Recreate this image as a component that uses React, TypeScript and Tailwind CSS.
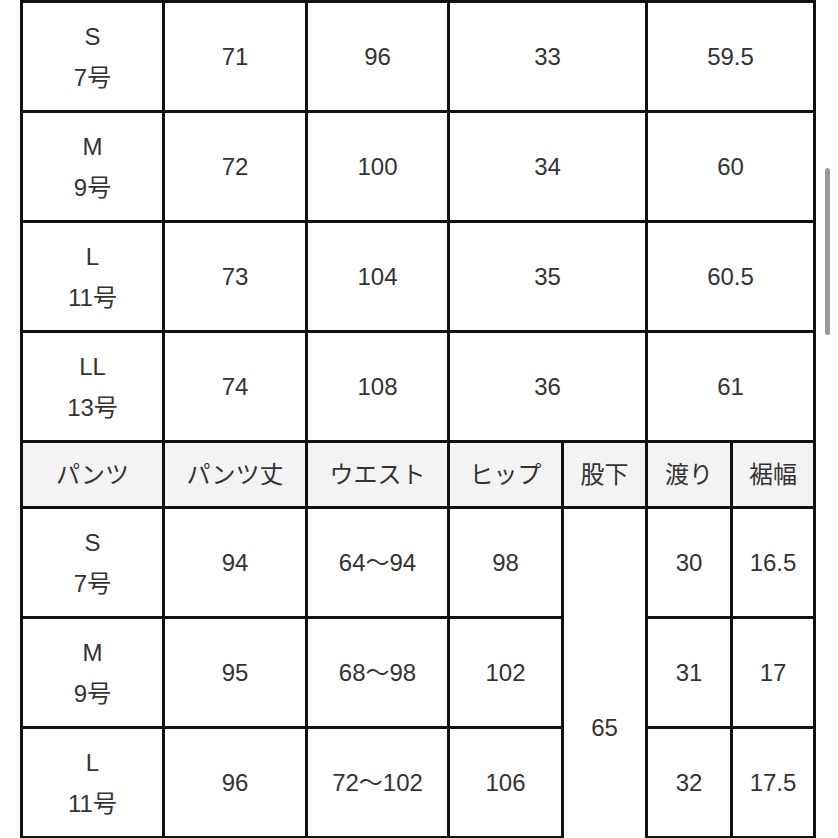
import React from "react";

type Row = { size: string; no: string; cells: string[] };

const topRows: Row[] = [
  { size: "S", no: "7号", cells: ["71", "96", "33", "59.5"] },
  { size: "M", no: "9号", cells: ["72", "100", "34", "60"] },
  { size: "L", no: "11号", cells: ["73", "104", "35", "60.5"] },
  { size: "LL", no: "13号", cells: ["74", "108", "36", "61"] },
];

const pantsHead = ["パンツ", "パンツ丈", "ウエスト", "ヒップ", "股下", "渡り", "裾幅"];

const pantsRows: Row[] = [
  { size: "S", no: "7号", cells: ["94", "64〜94", "98", "30", "16.5"] },
  { size: "M", no: "9号", cells: ["95", "68〜98", "102", "31", "17"] },
  { size: "L", no: "11号", cells: ["96", "72〜102", "106", "32", "17.5"] },
];

function Cell({
  children,
  className = "",
  head = false,
}: {
  children?: React.ReactNode;
  className?: string;
  head?: boolean;
}) {
  return (
    <div
      className={`flex items-center justify-center text-center ${head ? "bg-[#f3f3f3]" : "bg-white"} ${className}`}
    >
      {children}
    </div>
  );
}

function SizeCell({ size, no }: { size: string; no: string }) {
  return (
    <Cell>
      <div className="leading-[41px]">
        <div>{size}</div>
        <div>{no}</div>
      </div>
    </Cell>
  );
}

export default function App() {
  return (
    <div
      className="relative h-[838px] overflow-hidden bg-white text-[24px] text-[#333]"
      style={{ fontFamily: '"Liberation Sans", "Noto Sans CJK JP", sans-serif' }}
    >
      <div className="ml-[20px] grid w-[796px] grid-cols-[139px_140px_139px_111px_81px_82px_80px] grid-rows-[repeat(4,107px)_63px_repeat(4,107px)] gap-[3px] bg-[#111] p-[3px]">
        {topRows.map((r) => (
          <React.Fragment key={r.size}>
            <SizeCell size={r.size} no={r.no} />
            <Cell>{r.cells[0]}</Cell>
            <Cell>{r.cells[1]}</Cell>
            <Cell className="col-span-2">{r.cells[2]}</Cell>
            <Cell className="col-span-2">{r.cells[3]}</Cell>
          </React.Fragment>
        ))}

        {pantsHead.map((h) => (
          <Cell key={h} head>
            {h}
          </Cell>
        ))}

        {pantsRows.map((r, i) => (
          <React.Fragment key={"p" + r.size}>
            <SizeCell size={r.size} no={r.no} />
            <Cell>{r.cells[0]}</Cell>
            <Cell>{r.cells[1]}</Cell>
            <Cell>{r.cells[2]}</Cell>
            {i === 0 && <Cell className="row-span-4">65</Cell>}
            <Cell>{r.cells[3]}</Cell>
            <Cell>{r.cells[4]}</Cell>
          </React.Fragment>
        ))}

        {/* next row starts below the fold */}
        <Cell />
        <Cell />
        <Cell />
        <Cell />
        <Cell />
        <Cell />
      </div>

      {/* scrollbar */}
      <div className="absolute left-[825px] top-[168px] h-[167px] w-[5px] rounded-full bg-[#999]" />
    </div>
  );
}
